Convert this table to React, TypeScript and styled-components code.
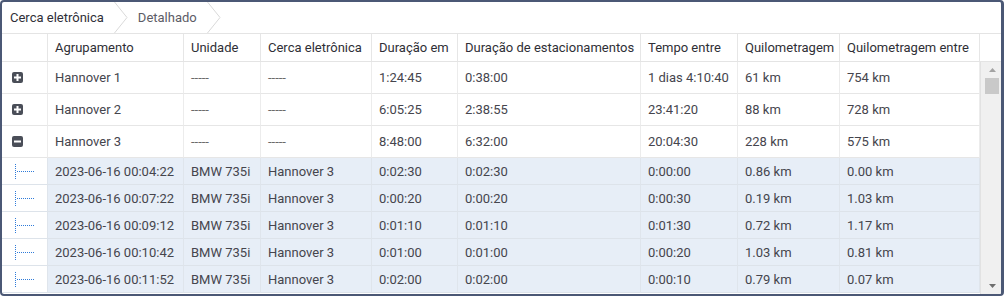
import React from "react";
import styled, { createGlobalStyle } from "styled-components";

const Global = createGlobalStyle`
  html, body { margin: 0; padding: 0; background: #ffffff; }
  body { font-family: Roboto, "Liberation Sans", Arial, sans-serif; }
  * { box-sizing: border-box; }
`;

const COLS = "46px 136px 77px 111px 86px 183px 97px 102px 140px";

const Frame = styled.div`
  width: 1004px;
  height: 296px;
  border: 2px solid #4b5875;
  border-right-width: 3px;
  border-radius: 4px;
  display: flex;
  flex-direction: column;
  overflow: hidden;
  background: #fff;
`;

const Breadcrumb = styled.div`
  height: 32px;
  flex: none;
  display: flex;
  align-items: center;
  padding-left: 6px;
  border-bottom: 1px solid #e4e4e4;
  font-size: 13px;
`;

const Crumb = styled.span<{ $muted?: boolean }>`
  color: ${(p) => (p.$muted ? "#5c5c66" : "#2f2f38")};
  padding: 0 10px 0 2px;
  white-space: nowrap;
`;

const Chevron = styled.svg`
  width: 14px;
  height: 31px;
  margin-right: 8px;
  flex: none;
`;

const HeaderRow = styled.div`
  display: grid;
  grid-template-columns: ${COLS} 1fr;
  height: 28px;
  flex: none;
  border-bottom: 1px solid #e4e4e4;
`;

const HeadCell = styled.div`
  display: flex;
  align-items: center;
  padding: 0 7px;
  font-size: 13px;
  color: #2f2f36;
  white-space: nowrap;
  overflow: hidden;
  border-right: 1px solid #e6e6e6;
  &:last-child { border-right: none; }
`;

const BodyWrap = styled.div`
  flex: 1;
  display: flex;
  min-height: 0;
`;

const Body = styled.div`
  width: 978px;
  flex: none;
  overflow: hidden;
`;

const Row = styled.div<{ $sub?: boolean }>`
  display: grid;
  grid-template-columns: ${COLS};
  height: ${(p) => (p.$sub ? 27 : 32)}px;
`;

const Cell = styled.div<{ $sub?: boolean; $tree?: boolean; $dash?: boolean }>`
  display: flex;
  align-items: center;
  padding: 0 7px;
  font-size: 13px;
  color: ${(p) => (p.$dash ? "#6a6a6a" : "#45454d")};
  white-space: nowrap;
  overflow: hidden;
  background: ${(p) => (p.$sub && !p.$tree ? "#e7eef7" : "#ffffff")};
  border-right: 1px solid ${(p) => (p.$sub ? "#dfe5ec" : "#ececec")};
  border-bottom: 1px solid ${(p) => (p.$sub ? "#dde3ea" : "#e6e6e6")};
  ${(p) => (p.$tree ? "padding: 0 0 0 10px;" : "")}
`;

const Scrollbar = styled.div`
  flex: 1;
  display: flex;
  flex-direction: column;
  align-items: center;
  background: #f0f0f0;
  border-left: 1px solid #e2e2e2;
  padding: 0 2px 0 4px;
`;

const ArrowBtn = styled.div`
  height: 16px;
  width: 100%;
  display: flex;
  align-items: center;
  justify-content: center;
  flex: none;
`;

const Thumb = styled.div`
  width: 100%;
  height: 16px;
  background: #c9c9c9;
  flex: none;
`;

const Track = styled.div`
  flex: 1;
`;

const Toggle = ({ open }: { open: boolean }) => (
  <svg width="11" height="11" viewBox="0 0 11 11">
    <rect x="0" y="0" width="11" height="11" rx="2" fill="#4a4e58" />
    <rect x="2" y="4.5" width="7" height="2" fill="#fff" />
    {!open && <rect x="4.5" y="2" width="2" height="7" fill="#fff" />}
  </svg>
);

const vDots = [6, 8, 10, 12, 14, 16, 18, 20];
const hDots = [5, 7, 9, 11, 13, 15, 17, 19, 21];

const TreeLine = () => (
  <svg width="22" height="26" viewBox="0 0 22 26" shapeRendering="crispEdges">
    {vDots.map((y) => (
      <rect key={"v" + y} x="3" y={y} width="1" height="1" fill="#2f7bd9" />
    ))}
    {hDots.map((x) => (
      <rect key={"h" + x} x={x} y="13" width="1" height="1" fill="#2f7bd9" />
    ))}
  </svg>
);

const headers = [
  "",
  "Agrupamento",
  "Unidade",
  "Cerca eletrônica",
  "Duração em",
  "Duração de estacionamentos",
  "Tempo entre",
  "Quilometragem",
  "Quilometragem entre",
  "",
];

const groups = [
  { name: "Hannover 1", d: "1:24:45", p: "0:38:00", t: "1 dias 4:10:40", k: "61 km", ke: "754 km", open: false },
  { name: "Hannover 2", d: "6:05:25", p: "2:38:55", t: "23:41:20", k: "88 km", ke: "728 km", open: false },
  { name: "Hannover 3", d: "8:48:00", p: "6:32:00", t: "20:04:30", k: "228 km", ke: "575 km", open: true },
];

const subs = [
  ["2023-06-16 00:04:22", "0:02:30", "0:02:30", "0:00:00", "0.86 km", "0.00 km"],
  ["2023-06-16 00:07:22", "0:00:20", "0:00:20", "0:00:30", "0.19 km", "1.03 km"],
  ["2023-06-16 00:09:12", "0:01:10", "0:01:10", "0:01:30", "0.72 km", "1.17 km"],
  ["2023-06-16 00:10:42", "0:01:00", "0:01:00", "0:00:20", "1.03 km", "0.81 km"],
  ["2023-06-16 00:11:52", "0:02:00", "0:02:00", "0:00:10", "0.79 km", "0.07 km"],
];

export default function App() {
  return (
    <>
      <Global />
      <Frame>
        <Breadcrumb>
          <Crumb>Cerca eletrônica</Crumb>
          <Chevron viewBox="0 0 14 31">
            <polyline points="0.5,0 13,15.5 0.5,31" fill="none" stroke="#d9d9d9" strokeWidth="1" />
          </Chevron>
          <Crumb $muted>Detalhado</Crumb>
          <Chevron viewBox="0 0 14 31">
            <polyline points="0.5,0 13,15.5 0.5,31" fill="none" stroke="#d9d9d9" strokeWidth="1" />
          </Chevron>
        </Breadcrumb>
        <HeaderRow>
          {headers.map((h, i) => (
            <HeadCell key={i}>{h}</HeadCell>
          ))}
        </HeaderRow>
        <BodyWrap>
          <Body>
            {groups.map((g) => (
              <React.Fragment key={g.name}>
                <Row>
                  <Cell $tree>
                    <Toggle open={g.open} />
                  </Cell>
                  <Cell>{g.name}</Cell>
                  <Cell $dash>-----</Cell>
                  <Cell $dash>-----</Cell>
                  <Cell>{g.d}</Cell>
                  <Cell>{g.p}</Cell>
                  <Cell>{g.t}</Cell>
                  <Cell>{g.k}</Cell>
                  <Cell>{g.ke}</Cell>
                </Row>
                {g.open &&
                  subs.map((s) => (
                    <Row $sub key={s[0]}>
                      <Cell $sub $tree>
                        <TreeLine />
                      </Cell>
                      <Cell $sub>{s[0]}</Cell>
                      <Cell $sub>BMW 735i</Cell>
                      <Cell $sub>Hannover 3</Cell>
                      <Cell $sub>{s[1]}</Cell>
                      <Cell $sub>{s[2]}</Cell>
                      <Cell $sub>{s[3]}</Cell>
                      <Cell $sub>{s[4]}</Cell>
                      <Cell $sub>{s[5]}</Cell>
                    </Row>
                  ))}
              </React.Fragment>
            ))}
          </Body>
          <Scrollbar>
            <ArrowBtn>
              <svg width="7" height="4" viewBox="0 0 7 4">
                <polygon points="0,4 7,4 3.5,0" fill="#a3a3a3" />
              </svg>
            </ArrowBtn>
            <Thumb />
            <Track />
            <ArrowBtn>
              <svg width="7" height="4" viewBox="0 0 7 4">
                <polygon points="0,0 7,0 3.5,4" fill="#6e6e6e" />
              </svg>
            </ArrowBtn>
          </Scrollbar>
        </BodyWrap>
      </Frame>
    </>
  );
}
